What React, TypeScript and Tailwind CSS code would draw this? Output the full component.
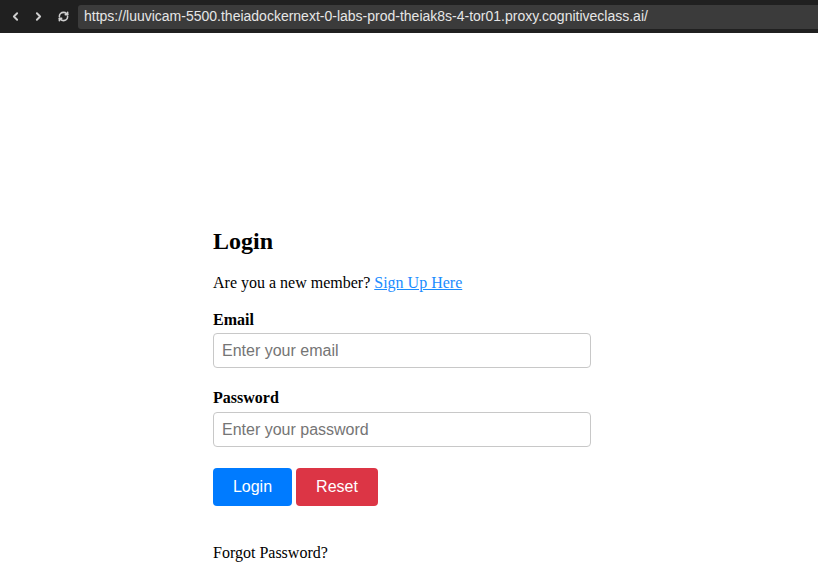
import { ChevronLeft, ChevronRight, RefreshCw } from "lucide-react";

const App = () => {
  return (
    <div className="min-h-[577px] w-full bg-white">
      {/* Browser bar */}
      <div className="flex h-[33px] items-center bg-[#202020] pr-0">
        <div className="flex w-[78px] items-center pl-[9px] text-[#cfcfcf]">
          <ChevronLeft size={13} strokeWidth={3.5} />
          <ChevronRight size={13} strokeWidth={3.5} className="ml-[10px]" />
          <RefreshCw size={11} strokeWidth={3.5} className="ml-[13px]" />
        </div>
        <div className="flex h-[24px] flex-1 items-center rounded-l-[3px] bg-[#3b3b3b] pl-[6px] font-['Liberation_Sans',Arial,sans-serif] text-[14px] text-[#e6e6e6]">
          https://luuvicam-5500.theiadockernext-0-labs-prod-theiak8s-4-tor01.proxy.cognitiveclass.ai/
        </div>
      </div>

      {/* Login form */}
      <div className="pl-[213px] pt-[194px] font-['Liberation_Serif','Times_New_Roman',serif] text-black">
        <div className="w-[378px]">
          <h2 className="text-[24px] font-bold leading-[28px]">Login</h2>
          <p className="mt-[18px] text-[16px] leading-[20px]">
            Are you a new member?{" "}
            <a href="#" className="text-[#1a8cff] underline">
              Sign Up Here
            </a>
          </p>

          <label className="mt-[17px] block text-[16px] font-bold leading-[20px]">Email</label>
          <input
            type="email"
            placeholder="Enter your email"
            className="mt-[3px] block h-[35px] w-full rounded-[4px] border border-[#c8c8c8] px-[8px] font-['Liberation_Sans',Arial,sans-serif] text-[16px] placeholder:text-[#757575] outline-none"
          />

          <label className="mt-[20px] block text-[16px] font-bold leading-[20px]">Password</label>
          <input
            type="password"
            placeholder="Enter your password"
            className="mt-[4px] block h-[35px] w-full rounded-[4px] border border-[#c8c8c8] px-[8px] font-['Liberation_Sans',Arial,sans-serif] text-[16px] placeholder:text-[#757575] outline-none"
          />

          <div className="mt-[21px] flex gap-[4px] font-['Liberation_Sans',Arial,sans-serif] text-[16px] text-white">
            <button className="h-[38px] w-[79px] rounded-[4px] bg-[#007bff]">Login</button>
            <button className="h-[38px] w-[82px] rounded-[4px] bg-[#dc3545]">Reset</button>
          </div>

          <p className="mt-[37px] text-[16px] leading-[20px]">Forgot Password?</p>
        </div>
      </div>
    </div>
  );
};

export default App;
